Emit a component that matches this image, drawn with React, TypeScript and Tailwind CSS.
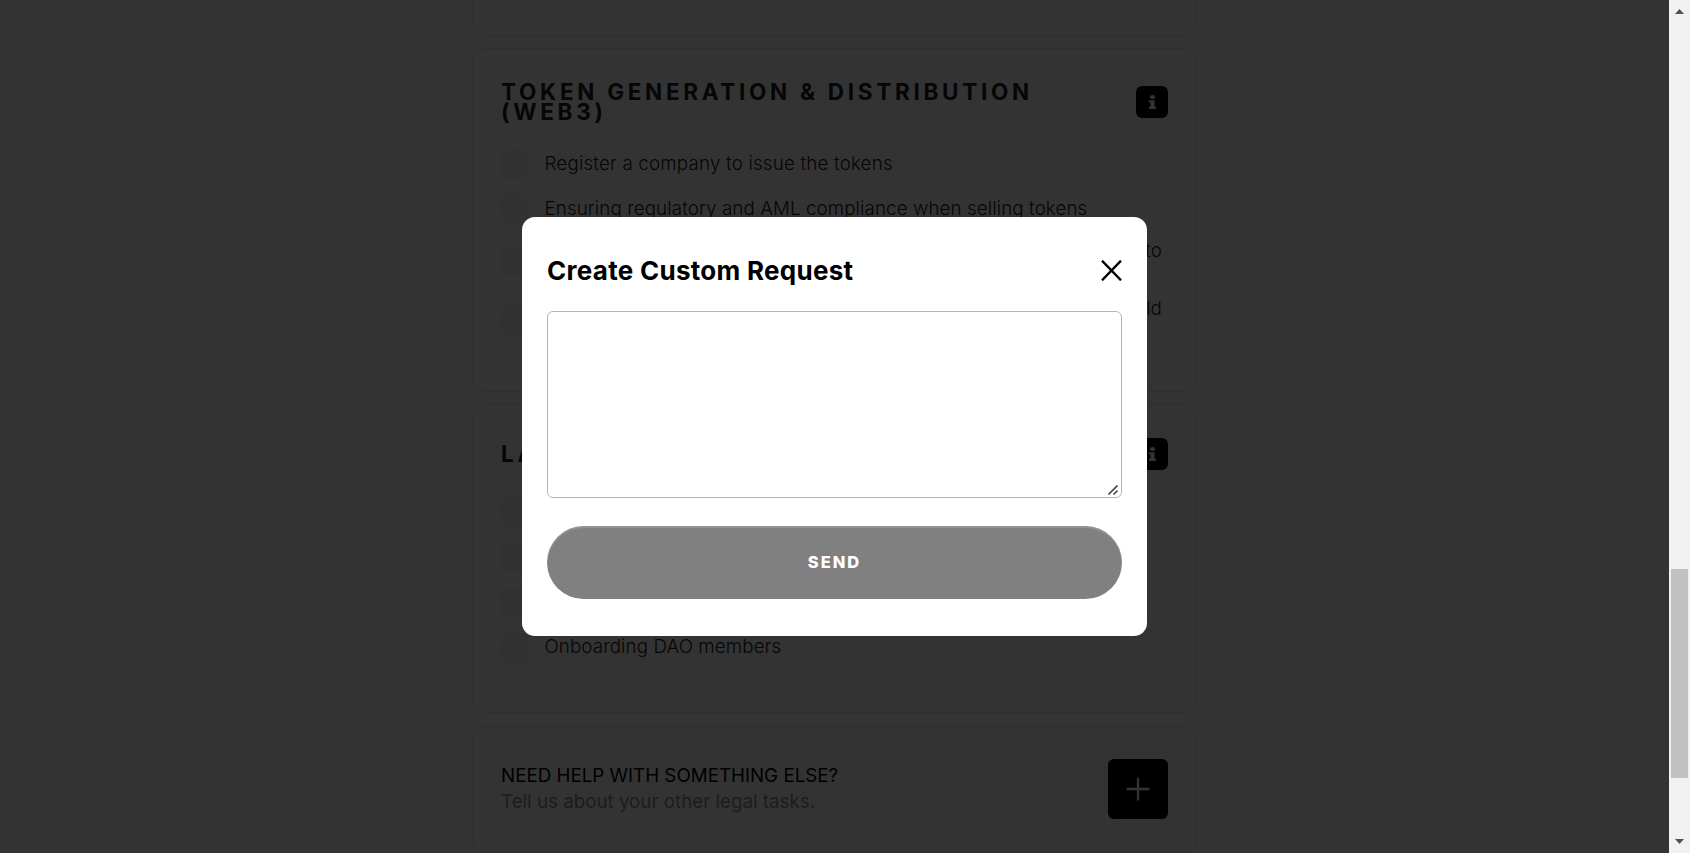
import React from "react";

function InfoButton() {
  return (
    <button className="flex h-8 w-8 shrink-0 items-center justify-center rounded-md bg-black pb-px text-white">
      <svg width="7" height="14" viewBox="0 0 192 512" preserveAspectRatio="none" fill="currentColor">
        <path d="M20 424.229h20V279.771H20c-11.046 0-20-8.954-20-20V212c0-11.046 8.954-20 20-20h112c11.046 0 20 8.954 20 20v212.229h20c11.046 0 20 8.954 20 20V492c0 11.046-8.954 20-20 20H20c-11.046 0-20-8.954-20-20v-47.771c0-11.046 8.954-20 20-20zM96 0C56.235 0 24 32.235 24 72s32.235 72 72 72 72-32.235 72-72S135.764 0 96 0z" />
      </svg>
    </button>
  );
}

function Option({ lines, wide = false }: { lines: string[]; wide?: boolean }) {
  const wraps = lines.length > 1;
  const tracking = wide ? "tracking-[0.19px]" : "tracking-[0.1px]";
  const shift = wraps ? "" : "-translate-y-px";
  return (
    <label className="flex items-center gap-[16.5px]">
      <span className="h-[27px] w-[27px] shrink-0 rounded-md border border-[#e9e9e9] bg-[#f7f7f7]" />
      <span className={`flex-1 pr-1.5 text-[18.75px] leading-5 font-light text-[#222] ${shift} ${tracking}`}>
        {lines.map((line, i) => (
          <span
            key={line}
            className={wraps && i === 0 ? "block whitespace-nowrap [text-align-last:justify]" : "block whitespace-nowrap"}
          >
            {line}
          </span>
        ))}
      </span>
    </label>
  );
}

function Heading({ children }: { children: React.ReactNode }) {
  return <h2 className="text-[22.5px] leading-5 font-bold tracking-[3.7px] text-[#222] uppercase">{children}</h2>;
}

const cardClass = "shrink-0 rounded-[13px] border border-[#e6e6e6] bg-white px-7";

function Page() {
  return (
    <main className="flex h-[853px] flex-1 flex-col items-center overflow-hidden bg-white">
      <div className="flex w-[725px] flex-col">
        <section className="h-9 shrink-0 rounded-b-[13px] border border-t-0 border-[#e6e6e6]" />

        <section className={`${cardClass} mt-3 h-[344px] pt-[33px]`}>
          <div className="flex items-center justify-between">
            <Heading>
              Token generation &amp; distribution
              <br />
              (Web3)
            </Heading>
            <InfoButton />
          </div>
          <div className="mt-[29px] flex flex-col gap-[18px]">
            <Option lines={["Register a company to issue the tokens"]} wide />
            <Option lines={["Ensuring regulatory and AML compliance when selling tokens"]} />
            <Option lines={["Drafting the token sale terms and the related agreements to", "distribute tokens"]} />
            <Option lines={["Legal opinion on whether the token issued by you could", "be a security"]} />
          </div>
        </section>

        <section className={`${cardClass} mt-3 h-[309px] pt-[33px]`}>
          <div className="flex items-center justify-between">
            <Heading>Launching a DAO</Heading>
            <InfoButton />
          </div>
          <div className="mt-[29px] flex flex-col gap-[18px]">
            <Option lines={["Structuring the DAO"]} />
            <Option lines={["DAO legal wrapper"]} />
            <Option lines={["DAO governance rules"]} />
            <Option lines={["Onboarding DAO members"]} />
          </div>
        </section>

        <section className={`${cardClass} mt-[13px] flex h-[127px] items-start justify-between pt-8`}>
          <div className="pt-1 text-[18.75px] leading-[26px]">
            <p className="text-black">NEED HELP WITH SOMETHING ELSE?</p>
            <p className="text-[#8a92a6]">Tell us about your other legal tasks.</p>
          </div>
          <button className="flex h-[60px] w-[60px] items-center justify-center rounded-md bg-black text-white">
            <svg width="24" height="24" viewBox="0 0 24 24" fill="none" stroke="currentColor" strokeWidth="2.3">
              <path d="M12 0.500v23M0.500 12h23" />
            </svg>
          </button>
        </section>
      </div>
    </main>
  );
}

function Modal() {
  return (
    <div role="dialog" className="flex h-[419px] w-[625px] flex-col rounded-[13px] bg-white px-[25px] pt-[37px]">
      <div className="flex h-8 items-center justify-between">
        <h3 className="text-[26px] font-[650] tracking-[0.28px] whitespace-nowrap text-black">Create Custom Request</h3>
        <button className="text-black">
          <svg width="21" height="21" viewBox="0 0 21 21" fill="none" stroke="currentColor" strokeWidth="2.4">
            <path d="M1 0.700L20 20.300M20 0.700L1 20.300" />
          </svg>
        </button>
      </div>
      <div className="relative mt-[25px] h-[187px] shrink-0">
        <textarea className="block h-full w-full resize-none rounded-md border border-[#aab5d3] outline-none" />
        <svg
          className="pointer-events-none absolute right-1 bottom-[3px]"
          width="10"
          height="10"
          viewBox="0 0 10 10"
          fill="none"
          stroke="#4a4a4a"
          strokeWidth="1.6"
        >
          <path d="M0.500 9.500L9.500 0.500M5.500 9.500L9.500 5.500" />
        </svg>
      </div>
      <button className="mt-7 flex h-[73px] shrink-0 items-center justify-center rounded-full bg-[#808080] text-[16.5px] font-extrabold tracking-[2px] text-white shadow-[inset_0_2px_1px_rgba(255,255,255,0.15)]">
        SEND
      </button>
    </div>
  );
}

function Scrollbar() {
  return (
    <div className="flex h-[853px] w-[21px] shrink-0 flex-col items-center bg-[#f1f1f1]">
      <svg className="mt-[9px]" width="9" height="5" viewBox="0 0 9 5" fill="#505050">
        <path d="M0 5L4.500 0L9 5z" />
      </svg>
      <div className="mt-[555px] h-[209px] w-[17px] bg-[#c1c1c1]" />
      <svg className="mt-[61px]" width="9" height="5" viewBox="0 0 9 5" fill="#505050">
        <path d="M0 0L4.500 5L9 0z" />
      </svg>
    </div>
  );
}

export default function App() {
  return (
    <div className="relative flex h-[853px] w-[1690px] overflow-hidden font-[Inter,sans-serif]">
      <Page />
      <Scrollbar />
      <div className="absolute top-0 left-0 flex h-[853px] w-[1669px] items-center justify-center bg-black/80">
        <Modal />
      </div>
    </div>
  );
}
